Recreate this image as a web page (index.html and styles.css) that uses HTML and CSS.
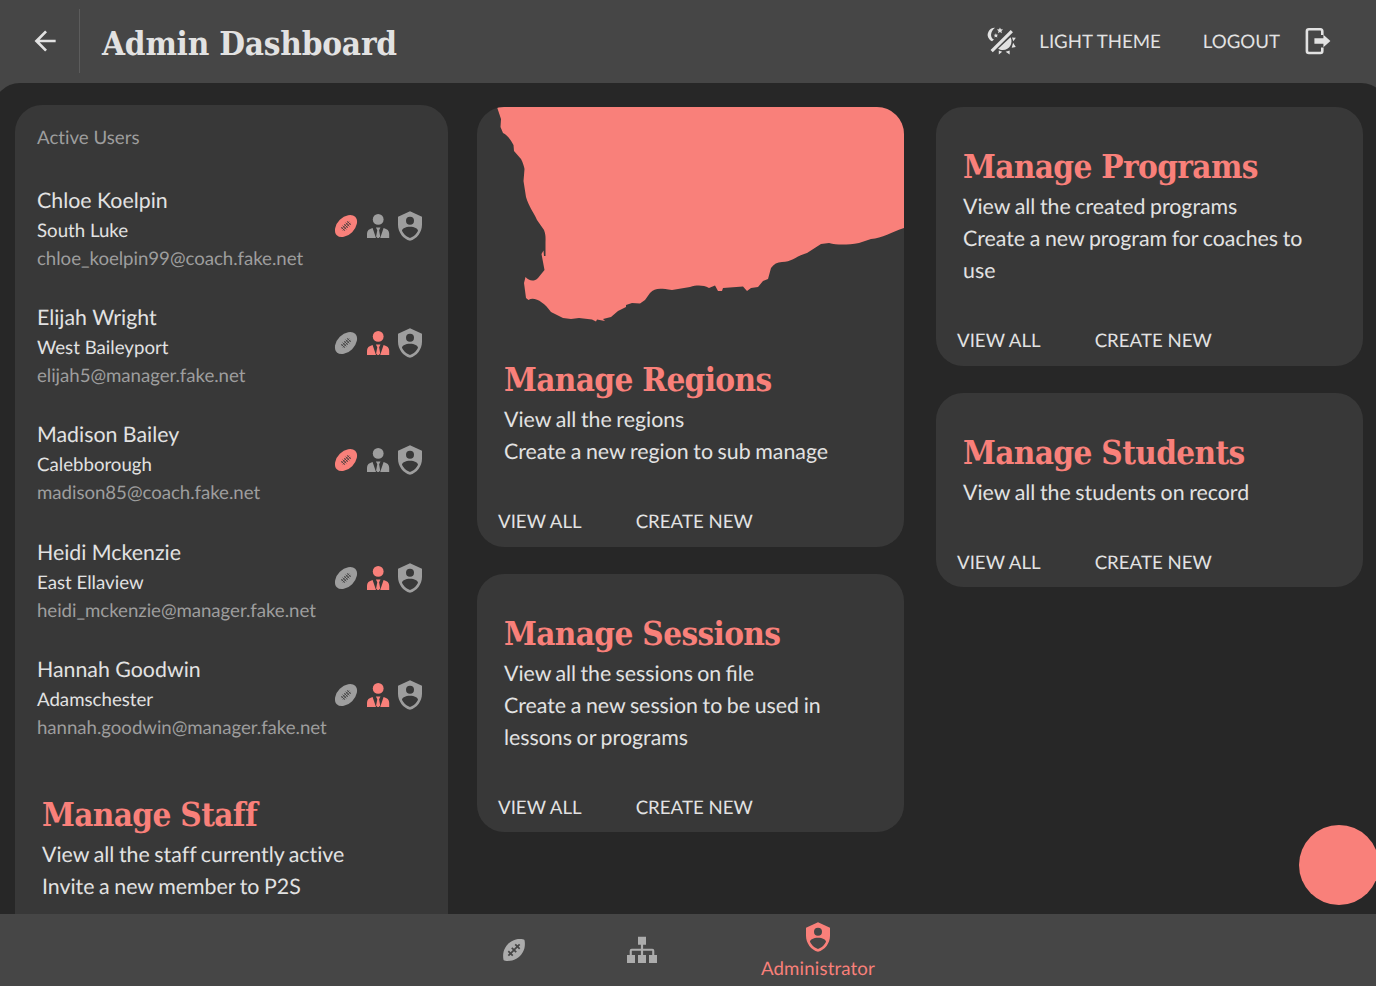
FILE: index.html
```html
<!DOCTYPE html>
<html lang="en">
<head>
<meta charset="utf-8">
<title>Admin Dashboard</title>
<link rel="stylesheet" href="styles.css">
</head>
<body>
<svg class="defs" aria-hidden="true">
  <symbol id="ball" viewBox="0 0 32 32">
    <g transform="rotate(-45 16 16)">
      <ellipse cx="16" cy="16" rx="13" ry="8.7"/>
      <path class="stitch" d="M10.6 15h10.8M10.6 17h10.8M11.8 13.3v5.4M13.9 13.3v5.4M16 13.3v5.4M18.1 13.3v5.4M20.2 13.3v5.4"/>
    </g>
  </symbol>
  <symbol id="tie" viewBox="0 0 32 32">
    <circle cx="16.200" cy="9.400" r="5.400"/>
    <path d="M5 28v-4.200c0-3.200 1.900-4.800 5.600-5.800l3.400 10zM27.200 28v-4.200c0-3.200-1.900-4.800-5.600-5.800L18.200 28zM13.900 17.600h4.600l-1.400 2.600 1.100 6.300-1.400 1.500h-1.300L14.100 26.500l1.200-6.300z"/>
  </symbol>
  <symbol id="shield" viewBox="0 0 24 24">
    <path d="M12,1L3,5V11C3,16.55 6.84,21.74 12,23C17.16,21.74 21,16.55 21,11V5L12,1M12,5A3,3 0 0,1 15,8A3,3 0 0,1 12,11A3,3 0 0,1 9,8A3,3 0 0,1 12,5M17.13,17C15.92,18.85 14.11,20.24 12,20.92C9.89,20.24 8.08,18.85 6.87,17C6.53,16.5 6.24,16 6,15.47C6,13.82 8.71,12.47 12,12.47C15.29,12.47 18,13.79 18,15.47C17.76,16 17.47,16.5 17.13,17Z"/>
  </symbol>
</svg>

<header class="topbar">
  <a class="back"><svg class="icon" viewBox="0 0 24 24"><path d="M20,11V13H8L13.5,18.5L12.08,19.92L4.16,12L12.08,4.08L13.5,5.5L8,11H20Z"/></svg></a>
  <h1 class="page-title">Admin Dashboard</h1>
  <a class="theme">
    <svg class="icon" viewBox="1 0.5 33 33">
      <path d="M10.300 3.300A7.300 7.300 0 0 0 4.500 15.300C5.300 16.500 6.300 17.100 7.300 17.300L9.200 15.500C5 13.500 5.200 7.300 10.300 3.300z"/>
      <path d="M15.400 3l.9 2 2.300.2-1.700 1.500.5 2.300-2-1.200-2 1.200.5-2.300-1.700-1.500 2.300-.2zM11.200 9l.7 1.500 1.700.1-1.300 1.100.4 1.700-1.500-.9-1.500.9.4-1.700-1.300-1.100 1.700-.1z"/>
      <path d="M26.500 5.600l2.300 2.300L8 28.700l-2.300-2.300zM26.300 13.200c3 5.600-.9 13.200-7.900 13.200-1.800 0-3.700-.6-4.900-1.400zM27.800 13.300l4 .3-2.600 3.600zM29 18.800l2.700 4.300-4.200.9zM14.200 26.800l3.500 1.200-3.500 2.800zM25.400 26.800v4.200l-4.200-2.800z"/>
    </svg>
    <span>LIGHT THEME</span>
  </a>
  <a class="logout">
    <span>LOGOUT</span>
    <svg class="icon" viewBox="0 0 32 32"><path class="door" d="M20.300 10V6.400Q20.300 4.200 18.400 4.200H6.900Q4.900 4.200 4.900 6.200v19.800q0 2 2 2h11.500q1.900 0 1.900-2V22.500"/><path d="M12.400 13.200h9V9.800l7 6.200-7 6.200V18.800h-9z"/></svg>
  </a>
</header>

<main class="content">
  <section class="card users">
    <h3 class="caption">Active Users</h3>
    <div class="user coach">
      <div><p class="name">Chloe Koelpin</p><p class="place">South Luke</p><p class="mail">chloe_koelpin99@coach.fake.net</p></div>
      <div class="roles"><svg class="icon r-coach"><use href="#ball"/></svg><svg class="icon r-manager"><use href="#tie"/></svg><svg class="icon"><use href="#shield"/></svg></div>
    </div>
    <div class="user manager">
      <div><p class="name">Elijah Wright</p><p class="place">West Baileyport</p><p class="mail">elijah5@manager.fake.net</p></div>
      <div class="roles"><svg class="icon r-coach"><use href="#ball"/></svg><svg class="icon r-manager"><use href="#tie"/></svg><svg class="icon"><use href="#shield"/></svg></div>
    </div>
    <div class="user coach">
      <div><p class="name">Madison Bailey</p><p class="place">Calebborough</p><p class="mail">madison85@coach.fake.net</p></div>
      <div class="roles"><svg class="icon r-coach"><use href="#ball"/></svg><svg class="icon r-manager"><use href="#tie"/></svg><svg class="icon"><use href="#shield"/></svg></div>
    </div>
    <div class="user manager">
      <div><p class="name">Heidi Mckenzie</p><p class="place">East Ellaview</p><p class="mail">heidi_mckenzie@manager.fake.net</p></div>
      <div class="roles"><svg class="icon r-coach"><use href="#ball"/></svg><svg class="icon r-manager"><use href="#tie"/></svg><svg class="icon"><use href="#shield"/></svg></div>
    </div>
    <div class="user manager">
      <div><p class="name">Hannah Goodwin</p><p class="place">Adamschester</p><p class="mail">hannah.goodwin@manager.fake.net</p></div>
      <div class="roles"><svg class="icon r-coach"><use href="#ball"/></svg><svg class="icon r-manager"><use href="#tie"/></svg><svg class="icon"><use href="#shield"/></svg></div>
    </div>
    <div class="body staff">
      <h2>Manage Staff</h2>
      <p>View all the staff currently active</p>
      <p>Invite a new member to P2S</p>
    </div>
  </section>

  <div class="column">
    <section class="card">
      <svg class="map" viewBox="0 0 427 222"><path d="M20 0L24 12 23.500 20 26 26C30 28 34 33 36.500 38L37 44 44 52C46 56 47 59 47.500 62L46.500 74 49 90C52 100 56 104 60 113L67 123C69 128 68.500 132 68.500 136L68.500 149 67 149 66.500 143.500 64.500 147 67.500 163 61 171C57 175 52 174 48.500 170L47 176 49 191 51.500 193C57 189 67 195 74 205L86 211 94 212 102 211 115 212.500 119 214.500 120 212.500 128 214 126 212 134 210 141 204 149 200 149 198 155 196 163 196.500 168 193 173 186C178 181 182 181 195 183L213 180C220 178 226 178 232 181L238 178.500 241 184H245L246 181 266 179.500 270 184 274 181 281 180 286 174 291 172 294 161Q298 155 305 155C315 155 319 149 330 146L344 137 352 136C360 138 370 138 382 136L394 132C405 131 415 125 427 121V0z"/></svg>
      <div class="body tight">
        <h2>Manage Regions</h2>
        <p>View all the regions</p>
        <p>Create a new region to sub manage</p>
      </div>
      <div class="actions"><a>VIEW ALL</a><a>CREATE NEW</a></div>
    </section>
    <section class="card">
      <div class="body">
        <h2>Manage Sessions</h2>
        <p class="lig">View all the sessions on file</p>
        <p>Create a new session to be used in lessons or programs</p>
      </div>
      <div class="actions"><a>VIEW ALL</a><a>CREATE NEW</a></div>
    </section>
  </div>

  <div class="column">
    <section class="card">
      <div class="body">
        <h2>Manage Programs</h2>
        <p>View all the created programs</p>
        <p>Create a new program for coaches to use</p>
      </div>
      <div class="actions"><a>VIEW ALL</a><a>CREATE NEW</a></div>
    </section>
    <section class="card">
      <div class="body">
        <h2>Manage Students</h2>
        <p>View all the students on record</p>
      </div>
      <div class="actions"><a>VIEW ALL</a><a>CREATE NEW</a></div>
    </section>
  </div>
  <button class="fab" aria-label="Add"></button>
</main>

<nav class="tabs">
  <a class="tab"><svg class="icon" viewBox="0 0 24 24"><path d="M7.5,7.5C9.17,5.87 11.29,4.69 13.37,4.18C15.46,3.67 17.5,3.83 18.6,4C19.71,4.15 19.87,4.31 20.03,5.41C20.18,6.5 20.33,8.55 19.82,10.63C19.31,12.71 18.13,14.83 16.5,16.5C14.83,18.13 12.71,19.31 10.63,19.82C8.55,20.33 6.5,20.18 5.41,20.03C4.31,19.87 4.15,19.71 4,18.6C3.83,17.5 3.67,15.46 4.18,13.37C4.69,11.29 5.87,9.17 7.5,7.5M7.3,15.79L8.21,16.7L9.42,15.5L10.63,16.7L11.54,15.79L10.34,14.58L12,12.91L13.21,14.12L14.12,13.21L12.91,12L14.58,10.34L15.79,11.54L16.7,10.63L15.5,9.42L16.7,8.21L15.79,7.3L14.58,8.5L13.37,7.3L12.46,8.21L13.66,9.42L12,11.09L10.79,9.88L9.88,10.79L11.09,12L9.42,13.66L8.21,12.46L7.3,13.37L8.5,14.58L7.3,15.79Z"/></svg></a>
  <a class="tab"><svg class="icon" viewBox="0 0 32 32"><path d="M12 2.700h8v8h-2.900v4h9.200q2 0 2 2v4.300H31v8h-8v-8h3.200v-4.200h-9.100V21H20v8h-8v-8h2.900v-4.200H5.800V21H9v8H1v-8h2.700v-4.300q0-2 2-2h9.200v-4H12z"/></svg></a>
  <a class="tab active"><svg class="icon"><use href="#shield"/></svg><span>Administrator</span></a>
</nav>
</body>
</html>
```
FILE: styles.css
```css
:root {
  --bar: #464646;
  --ground: #272727;
  --card: #383838;
  --accent: #f9807a;
  --text: #e2e2e2;
  --muted: #9e9e9e;
}
* { box-sizing: border-box; margin: 0; padding: 0; }
body {
  height: 986px;
  display: flex;
  flex-direction: column;
  overflow: hidden;
  background: var(--bar);
  color: var(--text);
  font: 21.33px/32px Lato, sans-serif;
  font-variant-ligatures: none;
  text-rendering: geometricPrecision;
}
.defs { display: none; }
.icon { width: 32px; height: 32px; fill: currentColor; flex: none; display: block; }

.topbar {
  height: 83px;
  flex: none;
  display: flex;
  align-items: center;
  padding: 0 42px 2px 0;
  font-size: 18.67px;
}
.back {
  width: 80px;
  height: 64px;
  padding: 16px 0 0 29px;
  border-right: 1px solid #5c5c5c;
}
.page-title, h2 {
  font-family: "DejaVu Serif Condensed", "DejaVu Serif", serif;
  font-stretch: condensed;
  font-weight: bold;
  font-size: 33px;
  line-height: 46px;
  letter-spacing: -.2px;
  white-space: nowrap;
}
.page-title { margin: 6px auto 0 22px; }
.theme, .logout { display: flex; align-items: center; }
.theme { gap: 21px; margin-right: 42px; }
.logout { gap: 22px; }
.door { fill: none; stroke: currentColor; stroke-width: 2.6; }

.content {
  position: relative;
  flex: 1;
  min-height: 0;
  margin: 0 -12px 0 -7px;
  padding: 22px 25px 0 22px;
  display: flex;
  align-items: flex-start;
  overflow: hidden;
  background: var(--ground);
  border-radius: 27px 27px 0 0;
}
.card { background: var(--card); border-radius: 27px; overflow: hidden; }
.users { width: 433px; height: 960px; margin-right: 29px; }
.caption {
  padding: 16px 22px;
  margin-bottom: 14.7px;
  font-size: 18.67px;
  font-weight: normal;
  color: var(--muted);
}
.user {
  display: flex;
  justify-content: space-between;
  padding: 0 22px 29.33px;
  color: var(--text);
}
.place, .mail { font-size: 18.67px; line-height: 28px; }
.mail { color: var(--muted); letter-spacing: -.04px; }
.roles { display: flex; padding-top: 26px; color: var(--muted); }
.coach .r-coach, .manager .r-manager { color: var(--accent); }
.stitch { fill: none; stroke: var(--card); stroke-width: .7; }

.column { width: 427px; margin: 2px 32px 0 0; display: grid; gap: 27px; }
.column:nth-child(3) { margin-right: 0; }
.map { display: block; width: 427px; height: 222px; fill: var(--accent); }
.body { padding: 37px 27px 0; }
.body p { word-spacing: -.85px; }
.body .lig { font-variant-ligatures: normal; word-spacing: -1.1px; }
.body.tight { padding-top: 28px; }
.body.staff { padding-top: 21.3px; }
h2 { color: var(--accent); letter-spacing: -.65px; }
.actions { display: flex; gap: 54px; padding: 38px 21px 9.67px; font-size: 18.67px; }

.fab {
  position: absolute;
  right: 9px;
  bottom: 9px;
  width: 80px;
  height: 80px;
  border: 0;
  border-radius: 50%;
  background: var(--accent);
}

.tabs {
  height: 72px;
  flex: none;
  display: flex;
  justify-content: center;
  padding-left: 4px;
  background: var(--bar);
  color: #acacac;
  font-size: 18.67px;
}
.tab { width: 128px; display: flex; flex-direction: column; align-items: center; justify-content: center; }
.tab.active { width: 224px; padding-top: 4px; color: var(--accent); line-height: 30px; letter-spacing: .15px; }
```
